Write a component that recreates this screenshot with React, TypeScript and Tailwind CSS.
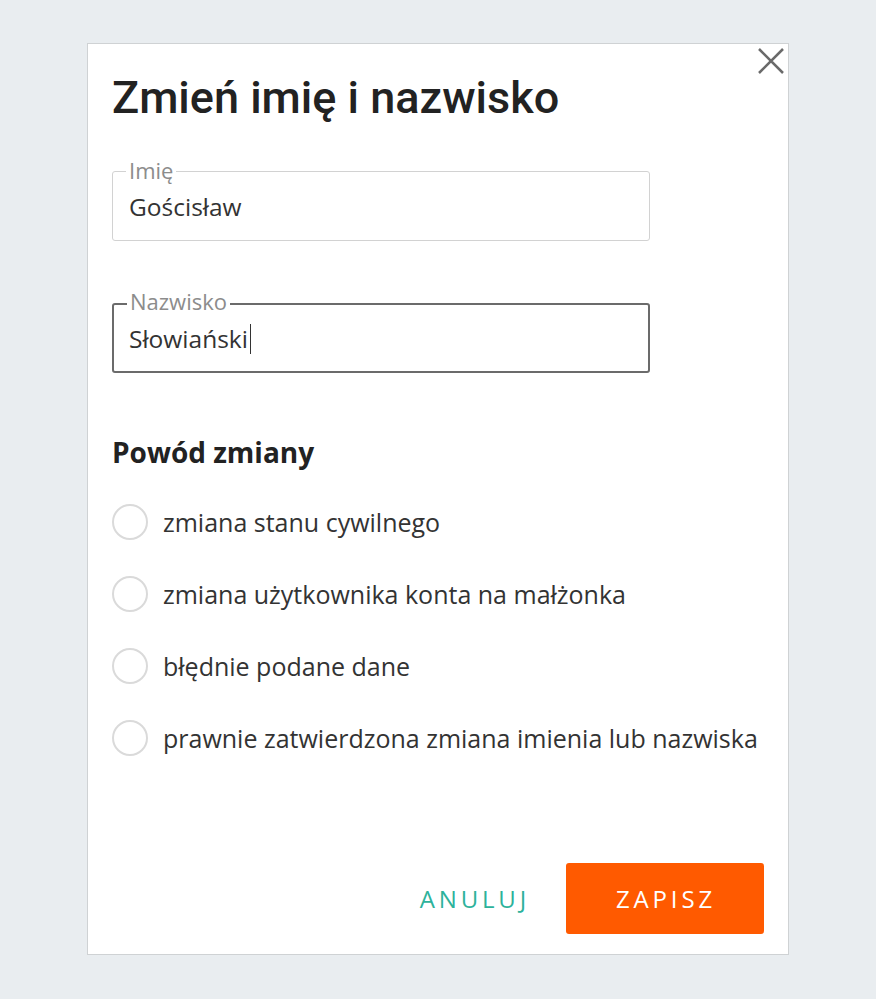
import React from "react";

const reasons = [
  "zmiana stanu cywilnego",
  "zmiana użytkownika konta na małżonka",
  "błędnie podane dane",
  "prawnie zatwierdzona zmiana imienia lub nazwiska",
];

const TextField: React.FC<{
  label: string;
  value: string;
  focused?: boolean;
  className?: string;
}> = ({ label, value, focused = false, className = "" }) => (
  <div
    className={`relative h-[70px] w-[538px] rounded-[3px] ${
      focused ? "border-2 border-[#6b6b6b]" : "border border-[#d2d2d2]"
    } ${className}`}
  >
    <span
      className={`absolute left-[13px] ${
        focused ? "-top-[16px]" : "-top-[14px]"
      } bg-white px-[3px] text-[22px] leading-[24px] text-[#8c8c8c]`}
    >
      {label}
    </span>
    <div
      className={`flex h-full items-center ${
        focused ? "pl-[15px] pt-[2px]" : "pl-[16px] pt-[3px]"
      } text-[24.5px] text-[#333]`}
    >
      {value}
      {focused && <span className="ml-[2px] inline-block h-[30px] w-[1px] bg-[#333]" />}
    </div>
  </div>
);

export default function App() {
  return (
    <div
      className="flex min-h-[999px] w-full justify-center bg-[#e9edf0] pt-[43px]"
      style={{ fontFamily: '"Open Sans", "Liberation Sans", sans-serif' }}
    >
      <div className="relative h-[912px] w-[702px] border border-[#cfd2d4] bg-white px-[24px]">
        <button
          aria-label="Zamknij"
          className="absolute right-[1px] top-[1px] flex h-[32px] w-[32px] items-center justify-center text-[#6a6a6a]"
        >
          <svg width="28" height="28" viewBox="0 0 28 28" fill="none">
            <path d="M2 2 L26 26 M26 2 L2 26" stroke="currentColor" strokeWidth="2.5" />
          </svg>
        </button>

        <h1
          className="mt-[28px] text-[45px] font-medium leading-[52px] text-[#222]"
          style={{ fontFamily: "Roboto, sans-serif" }}
        >
          Zmień imię i nazwisko
        </h1>

        <TextField label="Imię" value="Gościsław" className="mt-[47px]" />
        <TextField label="Nazwisko" value="Słowiański" focused className="mt-[62px]" />

        <h2 className="mt-[60px] text-[28px] font-bold leading-[38px] text-[#222]">
          Powód zmiany
        </h2>

        <div className="mt-[33px] flex flex-col gap-[36px]">
          {reasons.map((r) => (
            <label key={r} className="flex h-[36px] items-center gap-[15px]">
              <span className="h-[36px] w-[36px] shrink-0 rounded-full border-2 border-[#dadada]" />
              <span className="text-[25px] leading-[36px] text-[#333]">{r}</span>
            </label>
          ))}
        </div>

        <div className="mt-[107px] flex items-center justify-end gap-[36px]">
          <button className="text-[24px] tracking-[0.16em] text-[#2db29b]">
            ANULUJ
          </button>
          <button className="flex h-[71px] w-[198px] items-center justify-center rounded-[3px] bg-[#ff5a00] pl-[2px] text-[24px] tracking-[0.16em] text-white">
            ZAPISZ
          </button>
        </div>
      </div>
    </div>
  );
}
